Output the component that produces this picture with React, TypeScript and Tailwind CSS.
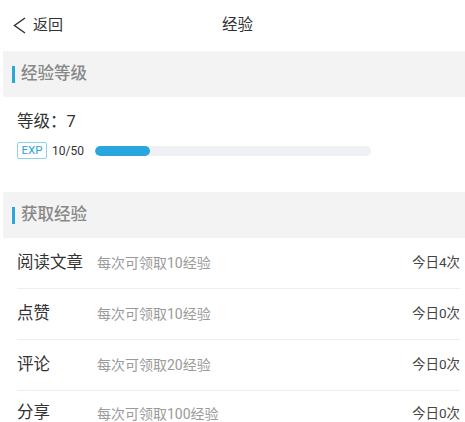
import React from "react";

const rows = [
  { name: "阅读文章", desc: "每次可领取10经验", today: "今日4次" },
  { name: "点赞", desc: "每次可领取10经验", today: "今日0次" },
  { name: "评论", desc: "每次可领取20经验", today: "今日0次" },
  { name: "分享", desc: "每次可领取100经验", today: "今日0次" },
];

function SectionHeader({ title }: { title: string }) {
  return (
    <div className="ml-[3px] h-[46px] bg-[#f3f3f3] flex items-center pl-[9px]">
      <div className="w-[3px] h-[17px] bg-[#2aa6d8] mr-[6px]" />
      <span className="text-[16.5px] font-medium text-[#888888] leading-none">{title}</span>
    </div>
  );
}

export default function App() {
  return (
    <div
      className="w-[465px] h-[422px] bg-white overflow-hidden"
      style={{ fontFamily: 'Roboto, "Noto Sans CJK SC", sans-serif' }}
    >
      <div className="relative h-[51px] flex items-center">
        <div className="flex items-center pl-[13px]">
          <svg width="14" height="17" viewBox="0 0 14 17" className="mr-[6px]">
            <polyline points="12,1 1.5,8.5 12,16" fill="none" stroke="#333" strokeWidth="1.5" />
          </svg>
          <span className="text-[15px] text-[#333] leading-none">返回</span>
        </div>
        <div className="absolute left-[222px] top-0 h-[51px] flex items-center">
          <span className="text-[15.5px] text-[#333] leading-none">经验</span>
        </div>
      </div>

      <SectionHeader title="经验等级" />

      <div className="pl-[17px] pt-[14px] h-[95px]">
        <div className="text-[16.5px] text-[#333] leading-[22px]">等级：7</div>
        <div className="flex items-center mt-[9px]">
          <div className="w-[30px] h-[17px] border border-[#8fd0ea] rounded-[2px] flex items-center justify-center text-[11.5px] text-[#2aa6d8] leading-none">
            EXP
          </div>
          <span className="ml-[5px] text-[12px] text-[#333] leading-none">10/50</span>
          <div className="ml-[11px] w-[276px] h-[10px] rounded-full bg-[#eef0f3] overflow-hidden">
            <div className="h-full rounded-full bg-[#29a6de]" style={{ width: "20%" }} />
          </div>
        </div>
      </div>

      <SectionHeader title="获取经验" />

      <div className="pl-[17px] pr-[5px]">
        {rows.map((r, i) => (
          <div
            key={r.name}
            className={`h-[51px] flex items-center ${i < rows.length - 1 ? "border-b border-[#eeeeee]" : "-mt-[3px]"}`}
          >
            <span className="w-[80px] text-[16.5px] text-[#333] leading-none">{r.name}</span>
            <span className="flex-1 text-[14px] text-[#9a9a9a] leading-none">{r.desc}</span>
            <span className="text-[13.5px] text-[#444] leading-none">{r.today}</span>
          </div>
        ))}
      </div>
    </div>
  );
}
